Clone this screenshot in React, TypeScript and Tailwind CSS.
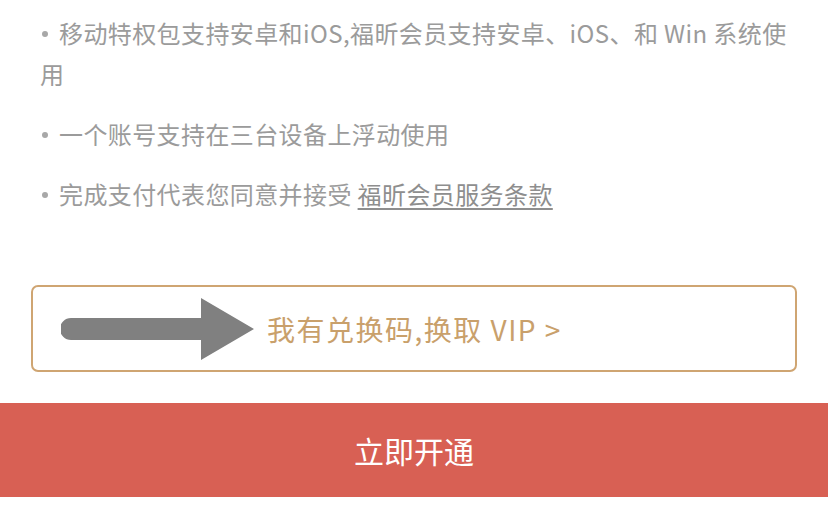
const FONT = '"Noto Sans CJK SC", "Noto Sans", sans-serif';

function Bullet({ children }: { children: React.ReactNode }) {
    return (
        <li className="text-[24px] leading-[41px] tracking-[0.4px] text-[#9b9b9b]">
            <span className="inline-block align-middle ml-[2px] mr-[11px] mb-[4px] w-[6px] h-[6px] rounded-full bg-[#a8a8a8]" />
            {children}
        </li>
    );
}

function ArrowIcon() {
    return (
        <svg width="196" height="62" viewBox="0 0 196 62" className="shrink-0">
            <path d="M10 20 H140 V0 L193 31 L140 62 V42 H10 A10 10 0 0 1 10 20 Z" fill="#808080" />
        </svg>
    );
}

export default function App() {
    return (
        <div className="w-[828px] h-[525px] bg-white overflow-hidden" style={{ fontFamily: FONT }}>
            <ul className="flex flex-col gap-[19px] px-[40px] pt-[12px]">
                <Bullet>移动特权包支持安卓和iOS,福昕会员支持安卓、iOS、和 Win 系统使用</Bullet>
                <Bullet>一个账号支持在三台设备上浮动使用</Bullet>
                <Bullet>
                    完成支付代表您同意并接受{' '}
                    <span className="underline underline-offset-[4px] text-[#8e8e8e]">福昕会员服务条款</span>
                </Bullet>
            </ul>

            <div className="mx-[31px] mt-[71px] h-[87px] rounded-[7px] border-2 border-[#cfa572] flex items-center pl-[28px]">
                <ArrowIcon />
                <span className="ml-[10px] text-[28px] text-[#c9a06b] tracking-[1.5px]">我有兑换码,换取 VIP &gt;</span>
            </div>

            <button className="mt-[31px] w-full h-[94px] bg-[#d86054] text-white text-[30px] flex items-center justify-center">
                立即开通
            </button>
        </div>
    );
}
